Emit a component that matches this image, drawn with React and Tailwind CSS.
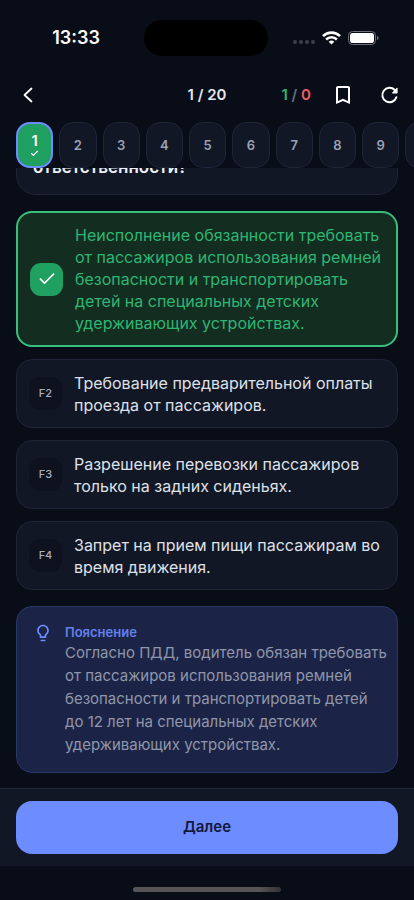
import { Check } from 'lucide-react'
import { MdBookmarkBorder, MdLightbulbOutline } from 'react-icons/md'

const TABS = Array.from({ length: 10 }, (_, i) => i + 1)

const OPTIONS = [
  {
    key: 'F1',
    correct: true,
    text: 'Неисполнение обязанности требовать от пассажиров использования ремней безопасности и транспортировать детей на специальных детских удерживающих устройствах.',
  },
  { key: 'F2', text: 'Требование предварительной оплаты проезда от пассажиров.' },
  { key: 'F3', text: 'Разрешение перевозки пассажиров только на задних сиденьях.' },
  { key: 'F4', text: 'Запрет на прием пищи пассажирам во время движения.' },
]

function StatusBar() {
  return (
    <div className="flex h-[76px] shrink-0 items-center justify-between">
      <div className="flex-1 pl-2 text-center text-[18px] leading-6 font-semibold text-white">13:33</div>
      <div className="h-9 w-[124px] rounded-full bg-black" />
      <div className="flex flex-1 items-center justify-center gap-[7px] pr-2.5">
        <svg className="mt-2 h-1 w-[22px]" viewBox="0 0 22 4" fill="#3c404a">
          <circle cx="2" cy="2" r="2" />
          <circle cx="8" cy="2" r="2" />
          <circle cx="14" cy="2" r="2" />
          <circle cx="20" cy="2" r="2" />
        </svg>
        <svg className="h-[14px] w-[19px]" viewBox="0 0 19 14" fill="none" stroke="#fff" strokeWidth="2.6">
          <path d="M1 5.1a12.2 12.2 0 0 1 17 0" />
          <path d="M4.1 8.5a7.7 7.7 0 0 1 10.8 0" />
          <path d="M9.5 13.6 6.7 10.8a4 4 0 0 1 5.6 0z" fill="#fff" stroke="none" />
        </svg>
        <svg className="h-[14px] w-[31px]" viewBox="0 0 31 14">
          <rect x=".5" y=".5" width="27" height="13" rx="4" fill="none" stroke="#6c6f78" />
          <rect x="2" y="2" width="24" height="10" rx="2.8" fill="#fff" />
          <path d="M29 5v4c1-.3 1.6-1.1 1.6-2S30 5.3 29 5z" fill="#6c6f78" />
        </svg>
      </div>
    </div>
  )
}

function RefreshIcon() {
  return (
    <svg className="h-6 w-6" viewBox="0 0 24 24" fill="none" stroke="currentColor" strokeWidth="2" strokeLinecap="round" strokeLinejoin="round">
      <path d="M18.4 14.3A7.2 7.2 0 1 1 16.700 7l1.300 1.300" />
      <path d="M19 5.500v4.300h-4.300z" fill="currentColor" strokeWidth="1.200" />
    </svg>
  )
}

function Header() {
  return (
    <header className="grid h-[46px] shrink-0 grid-cols-[1fr_auto_1fr] items-start px-3">
      <button aria-label="Назад" className="flex h-[38px] w-8 items-center justify-center text-white">
        <svg className="h-4 w-4" viewBox="0 0 16 16" fill="none" stroke="currentColor" strokeWidth="1.8" strokeLinecap="round" strokeLinejoin="round">
          <path d="M11.500 1.500 4.500 8l7 6.500" />
        </svg>
      </button>
      <h1 className="text-[15px] leading-[38px] font-semibold text-[#e4e6ec]">1 / 20</h1>
      <div className="flex h-[38px] items-center justify-end">
        <p className="mr-5 text-[15px] font-semibold text-[#64708a]">
          <span className="text-[#2fb574]">1</span> / <span className="text-[#e95f68]">0</span>
        </p>
        <button aria-label="В закладки" className="mr-[23px] text-white">
          <MdBookmarkBorder className="h-6 w-6" />
        </button>
        <button aria-label="Начать заново" className="text-white">
          <RefreshIcon />
        </button>
      </div>
    </header>
  )
}

function QuestionTabs() {
  return (
    <nav className="flex shrink-0 gap-1.5 overflow-hidden">
      {TABS.map(n => (
        <button
          key={n}
          className={`flex h-[46px] w-[9%] shrink-0 flex-col items-center justify-center rounded-[14px] leading-4 font-semibold first:ml-4 ${
            n === 1
              ? 'border-2 border-[#6c8cff] bg-[#20a060] text-[14px] text-white'
              : 'border border-[#1f2437] bg-[#121726] text-[13px] text-[#9ba1b3]'
          }`}
        >
          {n}
          {n === 1 && <Check className="h-[9px] w-[9px]" strokeWidth={3} />}
        </button>
      ))}
    </nav>
  )
}

function Option({ option }) {
  return (
    <button
      className={`flex min-h-[69px] w-full shrink-0 items-center rounded-2xl px-3 py-[11px] text-left ${
        option.correct
          ? 'border-2 border-[#37c07c] bg-[#132d20] text-[#2fb574]'
          : 'border border-[#1f2437] bg-[#121726] text-[#dfe1e8]'
      }`}
    >
      <span
        className={`mr-3 flex h-[33px] w-[33px] shrink-0 items-center justify-center rounded-[11px] text-[11px] font-medium ${
          option.correct ? 'bg-[#20a060] text-white' : 'bg-[#0d121e] text-[#a9aec0]'
        }`}
      >
        {option.correct ? <Check className="h-5 w-5" strokeWidth={2} /> : option.key}
      </span>
      <span className="text-[16px] leading-[22px]">{option.text}</span>
    </button>
  )
}

function Explanation() {
  return (
    <section className="mt-4 flex shrink-0 gap-3 rounded-2xl border border-[#2a3868] bg-[#1b2446] py-4 pr-2 pl-4">
      <MdLightbulbOutline className="h-5 w-5 shrink-0 text-[#6c8cff]" />
      <div>
        <h2 className="text-[13px] leading-[18px] font-semibold text-[#6480ec]">Пояснение</h2>
        <p className="text-[15px] leading-[23px] text-[#9096ab]">
          Согласно ПДД, водитель обязан требовать от пассажиров использования ремней безопасности и
          транспортировать детей до 12 лет на специальных детских удерживающих устройствах.
        </p>
      </div>
    </section>
  )
}

export default function App() {
  return (
    <div className="flex h-screen flex-col bg-[#090d18] font-['Inter',sans-serif]">
      <StatusBar />
      <Header />
      <QuestionTabs />

      <main className="flex min-h-0 flex-1 flex-col justify-end overflow-hidden px-4 pb-[15px]">
        <div className="mb-4 shrink-0 rounded-[20px] border border-[#1f2437] bg-[#121726] p-4">
          <p className="text-[17px] leading-[22px] font-semibold text-[#eef0f5]">ответственности?</p>
        </div>
        <div className="flex shrink-0 flex-col gap-3">
          {OPTIONS.map(o => (
            <Option key={o.key} option={o} />
          ))}
        </div>
        <Explanation />
      </main>

      <footer className="shrink-0">
        <div className="border-t border-[#1f2437] bg-[#121726] px-4 py-3">
          <button className="h-[53px] w-full rounded-2xl bg-[#6c8cff] text-[15px] font-semibold text-[#12183a]">
            Далее
          </button>
        </div>
        <div className="flex h-[34px] items-end justify-center pb-2">
          <div className="h-[5px] w-[148px] rounded-full bg-linear-to-r from-[#555] from-85% to-[#333]" />
        </div>
      </footer>
    </div>
  )
}
